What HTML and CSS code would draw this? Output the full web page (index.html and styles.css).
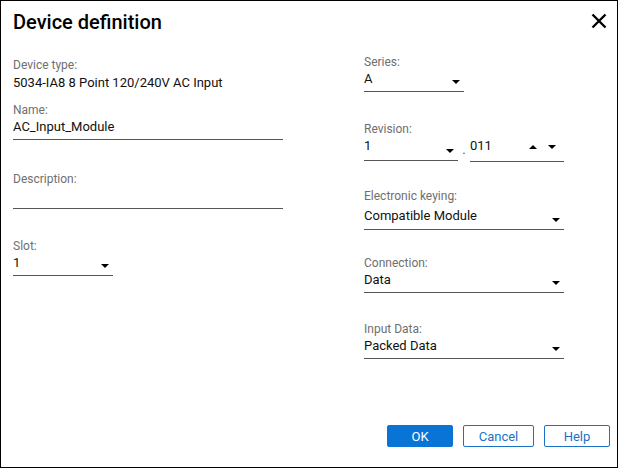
FILE: index.html
```html
<!DOCTYPE html>
<html lang="en">
<head>
    <meta charset="UTF-8">
    <title>Device definition</title>
    <link rel="stylesheet" href="styles.css">
</head>
<body>
    <div class="dialog">
        <!-- Title bar -->
        <div class="dialog-header">
            <h1>Device definition</h1>
            <div class="close-btn" title="Close">
                <svg width="16" height="16" viewBox="0 0 16 16">
                    <path d="M1.5 1.5 L14.5 14.5 M14.5 1.5 L1.5 14.5" stroke="#000" stroke-width="2.4" fill="none"/>
                </svg>
            </div>
        </div>

        <div class="dialog-body">
            <div class="column left-col">
                <div class="field static">
                    <div class="label">Device type:</div>
                    <div class="static-value">5034-IA8 8 Point 120/240V AC Input</div>
                </div>
                <div class="field name">
                    <div class="label">Name:</div>
                    <div class="input">AC_Input_Module</div>
                </div>
                <div class="field desc">
                    <div class="label">Description:</div>
                    <div class="input"></div>
                </div>
                <div class="field slot">
                    <div class="label">Slot:</div>
                    <div class="input select short">1<span class="arrow-down"></span></div>
                </div>
            </div>

            <div class="column right-col">
                <div class="field series">
                    <div class="label">Series:</div>
                    <div class="input select short">A<span class="arrow-down"></span></div>
                </div>
                <div class="field revision">
                    <div class="label">Revision:</div>
                    <div class="revision-row">
                        <div class="input select rev">1<span class="arrow-down"></span></div>
                        <span class="dot">.</span>
                        <div class="input spinner rev">011<span class="arrow-up"></span><span class="arrow-down"></span></div>
                    </div>
                </div>
                <div class="field keying">
                    <div class="label">Electronic keying:</div>
                    <div class="input select">Compatible Module<span class="arrow-down"></span></div>
                </div>
                <div class="field connection">
                    <div class="label">Connection:</div>
                    <div class="input select">Data<span class="arrow-down"></span></div>
                </div>
                <div class="field">
                    <div class="label">Input Data:</div>
                    <div class="input select">Packed Data<span class="arrow-down"></span></div>
                </div>
            </div>
        </div>

        <div class="dialog-footer">
            <button class="btn primary">OK</button>
            <button class="btn cancel">Cancel</button>
            <button class="btn">Help</button>
        </div>
    </div>
</body>
</html>
```

FILE: styles.css
```css
body, html {
    margin: 0;
    padding: 0;
    background-color: #ffffff;
    font-family: Roboto, "Liberation Sans", sans-serif;
    color: #111111;
}

.dialog {
    width: 618px;
    height: 468px;
    box-sizing: border-box;
    border: 1px solid #000000;
    display: flex;
    flex-direction: column;
}

.dialog-header {
    display: flex;
    justify-content: space-between;
    align-items: flex-start;
    padding: 8px 10px 0 12px;
}

.dialog-header h1 {
    margin: 0;
    font-size: 20px;
    font-weight: 500;
    line-height: 26px;
    color: #000000;
}

.close-btn {
    width: 16px;
    height: 16px;
    margin-top: 4px;
    cursor: pointer;
}

.dialog-body {
    flex: 1;
    display: flex;
    gap: 81px;
    padding: 0 12px;
}

.column {
    display: flex;
    flex-direction: column;
}

.left-col {
    width: 270px;
    padding-top: 22px;
}

.right-col {
    width: 200px;
    padding-top: 19px;
}

/* vertical rhythm, tuned per field */
.field {
    margin-bottom: 27px;
}

.field.static {
    margin-bottom: 11px;
}

.field.name {
    margin-bottom: 31px;
}

.field.desc {
    margin-bottom: 29px;
}

.field.series {
    margin-bottom: 29px;
}

.field.revision {
    margin-bottom: 26px;
}

.field.keying {
    margin-bottom: 25px;
}

.field.connection {
    margin-bottom: 28px;
}

.label {
    font-size: 12px;
    line-height: 16px;
    color: #6f6f6f;
}

.static-value {
    font-size: 13px;
    line-height: 17px;
    margin-top: 1px;
}

.input {
    position: relative;
    box-sizing: border-box;
    height: 22px;
    line-height: 17px;
    font-size: 13px;
    border-bottom: 1px solid #555555;
}

.revision .input {
    height: 24px;
}

.keying .input {
    height: 26px;
    padding-top: 3px;
}

.input.short {
    width: 100px;
}

.revision-row {
    display: flex;
    align-items: flex-start;
}

.input.rev {
    width: 94px;
}

.revision .input.spinner {
    height: 25px;
}

.dot {
    width: 12px;
    font-size: 13px;
    line-height: 17px;
    padding-top: 4px;
    text-align: center;
    color: #555;
}

/* little triangles for selects and spinners */
.arrow-down, .arrow-up {
    position: absolute;
    right: 4px;
    bottom: 7px;
    width: 0;
    height: 0;
    border-left: 4px solid transparent;
    border-right: 4px solid transparent;
}

.arrow-down {
    border-top: 4.5px solid #000000;
}

.arrow-up {
    right: 27px;
    bottom: 12px;
    border-bottom: 4.5px solid #000000;
}

.spinner .arrow-down {
    right: 8px;
    bottom: 12px;
}

.dialog-footer {
    display: flex;
    justify-content: flex-end;
    gap: 10px;
    padding: 0 7px 20px 0;
}

.btn {
    height: 22px;
    width: 66px;
    padding: 0;
    font-family: Roboto, "Liberation Sans", sans-serif;
    font-size: 13px;
    background-color: #ffffff;
    color: #1a72c8;
    border: 1px solid #1a72c8;
    border-radius: 2px;
    cursor: pointer;
}

.btn.cancel {
    width: 71px;
}

.btn.primary {
    background-color: #0a74d6;
    border-color: #0a74d6;
    color: #ffffff;
}
```
